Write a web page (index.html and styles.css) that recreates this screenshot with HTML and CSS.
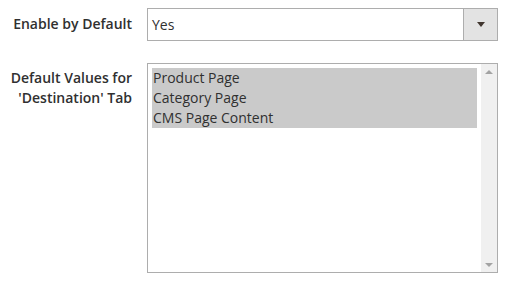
FILE: index.html
```html
<!DOCTYPE html>
<html lang="en">
<head>
  <meta charset="UTF-8" />
  <title>Default Settings</title>
  <link rel="stylesheet" href="styles.css">
</head>
<body>

  <div class="form">
    <!-- Enable -->
    <div class="field">
      <label class="field-label label-single">Enable by Default</label>
      <div class="select-box">
        <span class="select-value">Yes</span>
        <span class="select-arrow"><span class="tri-down"></span></span>
      </div>
    </div>

    <!-- Multiselect -->
    <div class="field field-multi">
      <label class="field-label label-multi">Default Values for<br>'Destination' Tab</label>
      <div class="multi-box">
        <div class="multi-options">
          <div class="multi-option selected">Product Page</div>
          <div class="multi-option selected">Category Page</div>
          <div class="multi-option selected">CMS Page Content</div>
        </div>
        <div class="scrollbar">
          <span class="tri-up small"></span>
          <span class="tri-down small"></span>
        </div>
      </div>
    </div>
  </div>

</body>
</html>
```

FILE: styles.css
```css
body {
  margin: 0;
  font-family: "Open Sans", Arial, sans-serif;
  font-size: 14px;
  color: #303030;
  background: #fff;
}

.form {
  padding-top: 8px;
  display: flex;
  flex-direction: column;
  gap: 22px;
}

.field {
  display: grid;
  grid-template-columns: 132px 351px;
  column-gap: 15px;
}

.field-label {
  text-align: right;
  line-height: 20px;
  font-weight: 600;
  color: #303030;
}

.label-single {
  padding-top: 6px;
}

.label-multi {
  padding-top: 5px;
}

.select-box {
  display: flex;
  height: 31px;
  border: 1px solid #adadad;
  background: #fff;
}

.select-value {
  flex: 1;
  padding-left: 4px;
  line-height: 31px;
}

.select-arrow {
  width: 33px;
  background: #e3e3e3;
  border-left: 1px solid #adadad;
  display: flex;
  align-items: center;
  justify-content: center;
}

.tri-down {
  width: 0;
  height: 0;
  border-left: 4px solid transparent;
  border-right: 4px solid transparent;
  border-top: 5px solid #41362f;
}

.tri-up {
  width: 0;
  height: 0;
  border-left: 4px solid transparent;
  border-right: 4px solid transparent;
  border-bottom: 4px solid #a3a3a3;
}

.tri-down.small {
  border-top: 4px solid #a3a3a3;
}

.multi-box {
  display: flex;
  height: 208px;
  border: 1px solid #adadad;
  background: #fff;
}

.multi-options {
  flex: 1;
  padding: 4px 4px 0 4px;
}

.multi-option {
  line-height: 20px;
  padding-left: 1px;
  color: #303030;
}

.multi-option.selected {
  background: #cacaca;
}

.scrollbar {
  width: 16px;
  background: #f0f0f0;
  display: flex;
  flex-direction: column;
  justify-content: space-between;
  align-items: center;
  padding: 6px 0 5px;
}
```
